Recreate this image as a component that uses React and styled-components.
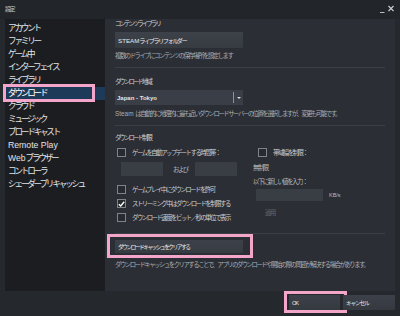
import React from 'react';
import styled, { createGlobalStyle, css } from 'styled-components';

const GlobalStyle = createGlobalStyle`
  html, body {
    margin: 0;
    padding: 0;
    background: #25282d;
  }
  body {
    font-family: "Liberation Sans", "Noto Sans CJK JP", sans-serif;
  }
`;

const pinkFrame = css`
  &::after {
    content: '';
    position: absolute;
    border: 3px solid #f3a6c9;
    pointer-events: none;
  }
`;

const Window = styled.div`
  width: 400px;
  height: 316px;
  display: flex;
  flex-direction: column;
  background: #25282d;
  overflow: hidden;
`;

const TitleBar = styled.div`
  height: 19px;
  flex: 0 0 19px;
  display: flex;
  align-items: center;
  justify-content: space-between;
  padding: 0 5px 2px 5px;
  box-sizing: border-box;
  background: #222529;
  color: #c4c6ca;
  font-size: 6px;
  letter-spacing: -1.6px;
`;

const WinControls = styled.svg`
  display: block;
`;

const Main = styled.div`
  flex: 0 0 272px;
  display: flex;
  padding: 0 5px;
`;

const Sidebar = styled.nav`
  width: 100px;
  flex: 0 0 100px;
  background: #1b1d21;
  padding-top: 3px;
  box-sizing: border-box;
  display: flex;
  flex-direction: column;
`;

const SideItem = styled.div`
  position: relative;
  height: 13px;
  line-height: 13px;
  padding-left: 3px;
  font-size: ${p => (p.$latin ? '8.7px' : '8.6px')};
  letter-spacing: ${p => (p.$latin ? '0' : '-2.2px')};
  color: #e2e4e6;
  white-space: nowrap;
  background: ${p => (p.$active ? '#1d3a59' : 'transparent')};
  ${p => p.$active && css`
    color: #ffffff;
    ${pinkFrame}
    &::after {
      left: -2px;
      top: -3px;
      width: 92px;
      bottom: -2px;
      box-sizing: border-box;
    }
  `}
`;

const Latin = styled.span`
  letter-spacing: 0;
`;

const Content = styled.div`
  flex: 1;
  background: #2b2e34;
  padding: 0 10px;
  box-sizing: border-box;
  display: flex;
  flex-direction: column;
  color: #c9cbcf;
  font-size: 6.4px;
  letter-spacing: -1.5px;
  white-space: nowrap;
`;

const Heading = styled.div`
  margin-top: ${p => p.$mt || 0}px;
  line-height: 9px;
  height: 9px;
  color: #cfd1d4;
  letter-spacing: -1.9px;
`;

const Desc = styled.div`
  margin-top: ${p => p.$mt || 0}px;
  line-height: 9px;
  height: 9px;
  color: #a9adb3;
`;

const Rule = styled.div`
  margin-top: ${p => p.$mt || 0}px;
  height: 1px;
  background: #3b3f46;
`;

const WideButton = styled.div`
  position: relative;
  margin-top: ${p => p.$mt || 0}px;
  width: 128px;
  height: ${p => p.$h}px;
  display: flex;
  align-items: center;
  padding-left: 3px;
  box-sizing: border-box;
  background: linear-gradient(#3d4149, #363a41);
  color: #e8e9eb;
  font-size: ${p => p.$small ? '5.8px' : '6.2px'};
  letter-spacing: ${p => p.$small ? '-1.6px' : '-1.5px'};
  ${p => p.$marked && css`
    ${pinkFrame}
    &::after {
      left: -8px;
      right: -10px;
      top: -6px;
      bottom: -5px;
    }
  `}
`;

const Select = styled.div`
  margin-top: ${p => p.$mt || 0}px;
  width: 128px;
  height: 15px;
  display: flex;
  align-items: center;
  padding-left: 2px;
  box-sizing: border-box;
  background: #3a3e46;
  color: #e4e5e7;
  font-size: 6px;
  font-weight: bold;
  letter-spacing: 0;
`;

const SelectText = styled.span`
  flex: 1;
`;

const SelectDivider = styled.span`
  width: 1px;
  height: 11px;
  background: #8d9096;
`;

const SelectArrow = styled.span`
  width: 9px;
  display: flex;
  justify-content: center;
  &::before {
    content: '';
    border-left: 2.5px solid transparent;
    border-right: 2.5px solid transparent;
    border-top: 2.5px solid #d9dadd;
  }
`;

const LimitGrid = styled.div`
  margin-top: 5px;
  display: grid;
  grid-template-columns: 138px 1fr;
`;

const Column = styled.div`
  display: flex;
  flex-direction: column;
`;

const CheckRow = styled.div`
  margin-top: ${p => p.$mt || 0}px;
  margin-left: ${p => p.$ml || 2}px;
  height: 11px;
  display: flex;
  align-items: center;
  gap: 6px;
  color: #cbcdd1;
`;

const Box = styled.span`
  width: 9px;
  height: 9px;
  box-sizing: border-box;
  border: 1px solid #80848a;
  background: #272a2f;
  display: flex;
  align-items: center;
  justify-content: center;
`;

const InputsRow = styled.div`
  margin-top: 4px;
  height: 14px;
  display: flex;
  align-items: center;
  padding-left: 6px;
`;

const TextInput = styled.span`
  width: ${p => p.$w}px;
  height: ${p => p.$h}px;
  background: #393d44;
  display: block;
`;

const And = styled.span`
  margin: 0 7px 0 10px;
  color: #b9bcc0;
`;

const Note = styled.div`
  margin-top: ${p => p.$mt || 0}px;
  line-height: 9px;
  height: 9px;
  color: #b6b9bd;
`;

const RateRow = styled.div`
  margin-top: 3px;
  padding-left: 3px;
  display: flex;
  align-items: center;
  gap: 6px;
  letter-spacing: 0;
  color: #b9bcc0;
  font-size: 5.5px;
`;

const ApplyButton = styled.div`
  margin-top: 4px;
  margin-left: 3px;
  width: 28px;
  height: 14px;
  display: flex;
  align-items: center;
  justify-content: center;
  color: #63676e;
`;

const Footer = styled.div`
  flex: 1;
  display: flex;
  justify-content: flex-end;
  align-items: flex-start;
  padding: 4px 5px 0 0;
  gap: 3px;
`;

const FooterButton = styled.div`
  position: relative;
  width: ${p => p.$w}px;
  height: 15px;
  display: flex;
  align-items: center;
  padding-left: 3px;
  box-sizing: border-box;
  background: linear-gradient(#3c4048, #353940);
  color: #e2e3e5;
  font-size: 5.8px;
  letter-spacing: -1.3px;
  ${p => p.$marked && css`
    ${pinkFrame}
    &::after {
      left: -5px;
      right: -7px;
      top: -4px;
      bottom: -3px;
    }
  `}
`;

const navItems = [
  'アカウント',
  'ファミリー',
  'ゲーム中',
  'インターフェイス',
  'ライブラリ',
  'ダウンロード',
  'クラウド',
  'ミュージック',
  'ブロードキャスト',
  'Remote Play',
  'Webブラウザー',
  'コントローラ',
  'シェーダープリキャッシュ',
];

const Check = ({ checked }) => (
  <Box>
    {checked && (
      <svg width="7" height="6" viewBox="0 0 7 6">
        <path d="M0.8 3.2 L2.7 5 L6.2 0.8" stroke="#ffffff" strokeWidth="1.4" fill="none" />
      </svg>
    )}
  </Box>
);

const App = () => {
  return (
    <Window>
      <GlobalStyle />
      <TitleBar>
        <span>設定</span>
        <WinControls width="16" height="10" viewBox="0 0 16 10">
          <path d="M1 8.5 H5.5" stroke="#b8bbc0" strokeWidth="1" />
          <path d="M9.5 2 L14.5 7 M14.5 2 L9.5 7" stroke="#d0d2d5" strokeWidth="1.1" />
        </WinControls>
      </TitleBar>

      <Main>
        <Sidebar>
          {navItems.map(item => {
            if (item === 'Remote Play') return <SideItem key={item} $latin>{item}</SideItem>;
            if (item.startsWith('Web')) {
              return (
                <SideItem key={item}>
                  <Latin>Web</Latin>{item.slice(3)}
                </SideItem>
              );
            }
            return (
              <SideItem key={item} $active={item === 'ダウンロード'}>
                {item}
              </SideItem>
            );
          })}
        </Sidebar>

        <Content>
          <Heading>コンテンツライブラリ</Heading>
          <WideButton $mt={4} $h={16}>
            <Latin>STEAM </Latin>ライブラリフォルダー
          </WideButton>
          <Desc $mt={3}>複数のドライブにコンテンツの保存場所を設定します</Desc>
          <Rule $mt={7} />

          <Heading $mt={9}>ダウンロード地域</Heading>
          <Select $mt={4}>
            <SelectText>Japan - Tokyo</SelectText>
            <SelectDivider />
            <SelectArrow />
          </Select>
          <Desc $mt={4}>
            <Latin>Steam </Latin>は自動的に地理的に最も近いダウンロードサーバーの位置を選択しますが、変更も可能です。
          </Desc>
          <Rule $mt={7} />

          <Heading $mt={7}>ダウンロード制限</Heading>
          <LimitGrid>
            <Column>
              <CheckRow>
                <Check />
                <span>ゲームを自動アップデートする時間帯：</span>
              </CheckRow>
              <InputsRow>
                <TextInput $w={42} $h={14} />
                <And>および</And>
                <TextInput $w={42} $h={14} />
              </InputsRow>
              <CheckRow $mt={8}>
                <Check />
                <span>ゲームプレイ中にダウンロードを許可</span>
              </CheckRow>
              <CheckRow $mt={3}>
                <Check checked />
                <span>ストリーミング中はダウンロードを制限する</span>
              </CheckRow>
              <CheckRow $mt={3}>
                <Check />
                <span>ダウンロード速度をビット／秒の単位で表示</span>
              </CheckRow>
            </Column>

            <Column>
              <CheckRow $ml={5}>
                <Check />
                <span>帯域幅を制限：</span>
              </CheckRow>
              <Note $mt={5}>無制限</Note>
              <Note $mt={5}>以下に新しい値を入力：</Note>
              <RateRow>
                <TextInput $w={67} $h={12} />
                <span>KB/s</span>
              </RateRow>
              <ApplyButton>適用</ApplyButton>
            </Column>
          </LimitGrid>

          <Rule $mt={10} />
          <WideButton $mt={6} $h={13} $small $marked>
            ダウンロードキャッシュをクリアする
          </WideButton>
          <Desc $mt={7}>
            ダウンロードキャッシュをクリアすることで、アプリのダウンロードや開始の際の問題が解決する場合があります。
          </Desc>
        </Content>
      </Main>

      <Footer>
        <FooterButton $w={51} $marked>OK</FooterButton>
        <FooterButton $w={52}>キャンセル</FooterButton>
      </Footer>
    </Window>
  );
};

export default App;
